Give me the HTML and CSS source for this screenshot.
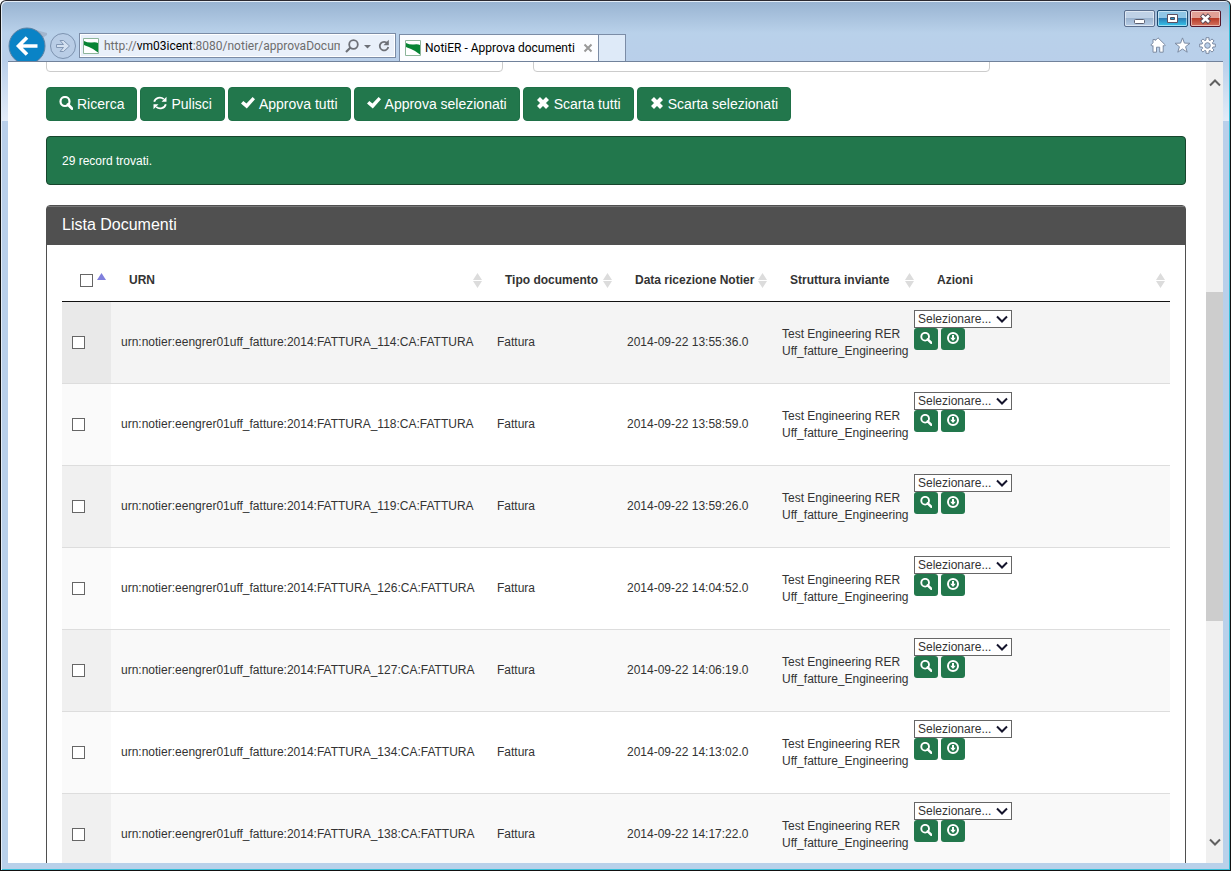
FILE: index.html
```html
<!DOCTYPE html>
<html lang="it">
<head>
<meta charset="utf-8">
<title>NotiER - Approva documenti</title>
<link rel="stylesheet" href="styles.css">
</head>
<body>
<svg class="sprite" aria-hidden="true">
  <symbol id="search" viewBox="0 0 14 14"><circle cx="6" cy="5.500" r="4.500" fill="none" stroke="currentColor" stroke-width="2.200"/><path d="m9 8.500 4 4" stroke="currentColor" stroke-width="3" stroke-linecap="round"/></symbol>
  <symbol id="refresh" viewBox="0 0 14 14"><path d="M1.200 5.800A5.700 5.200 0 0 1 10.800 3.200M12.800 8.200A5.700 5.200 0 0 1 3.200 10.800" fill="none" stroke="currentColor" stroke-width="1.800"/><path d="M13.500.7v5H8.500zM.5 13.300v-5h5z"/></symbol>
  <symbol id="check" viewBox="0 0 14 14"><path d="M0 7.600 2.300 5l3.200 2.600L11.600 1 14 3.200 5.800 12.500z"/></symbol>
  <symbol id="times" viewBox="0 0 14 14"><path d="m2.500 2.500 9 9m0-9-9 9" stroke="currentColor" stroke-width="4.200"/></symbol>
  <symbol id="download" viewBox="0 0 12 12"><circle cx="6" cy="6" r="5" fill="none" stroke="currentColor" stroke-width="2"/><path d="M5 3h2v2.800h1.800L6 9 3.200 5.800H5z"/></symbol>
  <symbol id="chevron" viewBox="0 0 12 8"><path d="M1 1.500 6 6.500 11 1.500" fill="none" stroke="currentColor" stroke-width="2"/></symbol>
  <symbol id="sort" viewBox="0 0 9 15"><path d="M4.500 0 9 7H0zM0 8h9l-4.500 7z"/></symbol>
  <symbol id="flag" viewBox="0 0 16 16"><path d="M.5.500h15v15H.5z" fill="#fff" stroke="#8db59a"/><path d="M1 3q4 2 8 1.500T15 5v9.500Q10 10.500 6 9T1 7z" fill="#078434"/></symbol>
</svg>

<div class="window">
  <header class="chrome">
    <div class="caption">
      <button class="win" type="button" aria-label="Riduci a icona"><svg width="31" height="17"><rect x="10.500" y="9.500" width="10" height="4" rx="1" fill="#fff" stroke="#5b5f70"/></svg></button>
      <button class="win win-max" type="button" aria-label="Ingrandisci"><svg width="31" height="17"><path d="M10.500 4.500h10v8h-10z" fill="#fff" stroke="#5b4f60"/><path d="M13.500 7.500h4v2h-4z" fill="#2b93c8" stroke="#4a4f60"/></svg></button>
      <button class="win win-close" type="button" aria-label="Chiudi"><svg width="31" height="17"><path d="m11.500 5 8 7.500m0-7.500-8 7.500" stroke="#5b4a55" stroke-width="4.500"/><path d="m12 5.500 7 6.500m0-6.500-7 6.500" stroke="#fff" stroke-width="2.500"/></svg></button>
    </div>
    <nav class="nav">
      <button class="plain" type="button" aria-label="Indietro"><svg width="39" height="35"><path d="M22 1q9 3 17 5v2q-6 3-7 11l-6 2z" fill="#a3b6ce"/><circle cx="19" cy="19" r="18" fill="#0a83c6" stroke="#5f83a4"/><path d="M29.500 19H11M19 10.500 10.500 19l8.500 8.500" fill="none" stroke="#fff" stroke-width="3.600"/></svg></button>
      <button class="plain" type="button" aria-label="Avanti"><svg width="32" height="35"><circle cx="16" cy="19" r="12.500" fill="#b9cde6" stroke="#7d93b0"/><path d="M9.500 17.500h7l-3.500-4h3.500l6 5.500-6 5.500H13l3.500-4h-7z" fill="#d4e1f1" stroke="#8297b4"/></svg></button>
      <div class="address">
        <svg class="fav"><use href="#flag"/></svg>
        <div class="url" role="textbox" aria-label="Indirizzo" contenteditable="true" spellcheck="false">http://<span class="host">vm03icent</span>:8080/notier/approvaDocum</div>
        <button class="plain" type="button" aria-label="Cerca"><svg width="14" height="14"><circle cx="8.500" cy="5.500" r="4.300" fill="none" stroke="#6d7077" stroke-width="1.800"/><path d="M5.500 8.500 1 13" stroke="#6d7077" stroke-width="2.200"/></svg></button>
        <button class="plain" type="button" aria-label="Cronologia"><svg width="8" height="14"><path d="M0 6h7L3.500 9.500z" fill="#6d7077"/></svg></button>
        <button class="plain" type="button" aria-label="Aggiorna"><svg width="14" height="14"><path d="M10.500 4.500A4.300 4.300 0 1 0 11.300 8" fill="none" stroke="#6d7077" stroke-width="1.800"/><path d="M11.800.8v5.400H6.500z" fill="#6d7077"/></svg></button>
      </div>
      <div class="tab">
        <svg class="fav"><use href="#flag"/></svg>
        <span class="tab-title">NotiER - Approva documenti</span>
        <button class="plain" type="button" aria-label="Chiudi scheda"><svg width="10" height="10"><path d="m1.500 1.500 7 7m0-7-7 7" stroke="#999" stroke-width="2"/></svg></button>
      </div>
      <button class="new-tab" type="button" aria-label="Nuova scheda"></button>
      <div class="tools">
        <button class="plain" type="button" aria-label="Pagina iniziale"><svg width="16" height="16"><path d="M8 .8 15.300 8l-1.200 1.300-.9-.8v6.700H9.700v-5H6.500v5H3V8.500l-.9.8L.8 8 3 5.800V2.500h2.300v1z" fill="#fff" stroke="#7c8ba3"/></svg></button>
        <button class="plain" type="button" aria-label="Preferiti"><svg width="17" height="16"><path d="m8.500.9 1.900 5.200 5.600.2-4.400 3.400 1.600 5.500-4.700-3.200-4.700 3.200 1.600-5.500L1 6.300l5.600-.2z" fill="#fff" stroke="#7c8ba3"/></svg></button>
        <button class="plain" type="button" aria-label="Strumenti"><svg width="17" height="17" viewBox="-8.500 -8.500 17 17"><path d="M-1.500-7.800h3V-5.400L2.800-4.900 4.500-6.600 6.600-4.500 4.900-2.800 5.400-1.500H7.800v3H5.400L4.900 2.800 6.600 4.500 4.500 6.600 2.800 4.900 1.500 5.400V7.800h-3V5.400L-2.800 4.900-4.500 6.600-6.600 4.500-4.900 2.800-5.400 1.500H-7.800v-3h2.400L-4.900-2.800-6.600-4.500-4.500-6.600-2.800-4.900-1.500-5.400z" fill="#fff" stroke="#7c8ba3"/><circle r="2.800" fill="#b9cfe9" stroke="#7c8ba3"/></svg></button>
      </div>
    </nav>
  </header>

  <div class="viewport">
    <main class="page">
      <div class="filters">
        <input class="field" type="text" aria-label="Filtro 1">
        <input class="field" type="text" aria-label="Filtro 2">
      </div>
      <div class="actions">
        <button class="btn" type="button"><svg class="icon"><use href="#search"/></svg>Ricerca</button>
        <button class="btn" type="button"><svg class="icon"><use href="#refresh"/></svg>Pulisci</button>
        <button class="btn" type="button"><svg class="icon"><use href="#check"/></svg>Approva tutti</button>
        <button class="btn" type="button"><svg class="icon"><use href="#check"/></svg>Approva selezionati</button>
        <button class="btn" type="button"><svg class="icon"><use href="#times"/></svg>Scarta tutti</button>
        <button class="btn" type="button"><svg class="icon"><use href="#times"/></svg>Scarta selezionati</button>
      </div>
      <div class="alert">29 record trovati.</div>
      <section class="panel">
        <h2 class="panel-title">Lista Documenti</h2>
        <div class="panel-body">
          <table class="docs">
            <colgroup><col class="c-check"><col class="c-urn"><col class="c-type"><col class="c-date"><col class="c-org"><col></colgroup>
            <thead>
              <tr>
                <th><div class="head head-check"><input class="box" type="checkbox" aria-label="Seleziona tutti"><svg class="asc" viewBox="0 0 9 7"><path d="M4.500 0 9 7H0z"/></svg></div></th>
                <th><div class="head">URN<svg class="sort"><use href="#sort"/></svg></div></th>
                <th><div class="head">Tipo documento<svg class="sort"><use href="#sort"/></svg></div></th>
                <th><div class="head">Data ricezione Notier<svg class="sort"><use href="#sort"/></svg></div></th>
                <th><div class="head">Struttura inviante<svg class="sort"><use href="#sort"/></svg></div></th>
                <th><div class="head">Azioni<svg class="sort"><use href="#sort"/></svg></div></th>
              </tr>
            </thead>
            <tbody id="rows"></tbody>
          </table>
        </div>
      </section>
    </main>
    <div class="scrollbar" aria-hidden="true">
      <div class="track"><svg class="arrow up"><use href="#chevron"/></svg></div>
      <div class="thumb"></div>
      <div class="track track-end"><svg class="arrow"><use href="#chevron"/></svg></div>
    </div>
  </div>
</div>
<script src="rows.js"></script>
</body>
</html>
```

FILE: styles.css
```css
* { box-sizing: border-box; }
body {
  margin: 0;
  font: 12px/17px "Liberation Sans", Arial, sans-serif;
  color: #333;
}
button, input, select { font: inherit; color: inherit; margin: 0; }
svg { display: block; flex: none; fill: currentColor; }
.sprite { position: absolute; width: 0; height: 0; }

/* Browser window */
.window {
  display: flex;
  flex-direction: column;
  height: 100vh;
  padding: 0 7px 7px;
  border: 1px solid #111;
  border-top-color: #2b2930;
  border-radius: 6px 6px 0 0;
  box-shadow: inset 1px 1px #e4edf7, inset -1px -1px #35bfd9;
  background:
    linear-gradient(#b9d1ea00 60px, #e3ecf8) left top / 7px 120px no-repeat,
    linear-gradient(#b9d1ea00 60px, #e3ecf8) right top / 7px 120px no-repeat,
    linear-gradient(#98b3d1, #b9d1ea 32px, #b9cfea 62px, #b9d1ea);
}
.chrome { flex: none; border-bottom: 1px solid #71829b; }
.caption { display: flex; justify-content: flex-end; gap: 2px; height: 26px; padding: 9px 2px 0 0; }
.win {
  width: 31px;
  height: 17px;
  padding: 0;
  border: 1px solid #5c6f8e;
  border-radius: 2px;
  box-shadow: inset 0 0 0 1px #ffffff80;
  background: linear-gradient(#bfd1e6 50%, #9cb4d0 50%, #b8cee6);
}
.win svg { margin: -1px; }
.win-max { border-color: #1c4a72; background: linear-gradient(#8fc6e6 50%, #2b7db4 50%, #36c6ec); }
.win-close { border-color: #55162a; background: linear-gradient(#e2a196 50%, #b83c28 50%, #d4735f); }
.plain { flex: none; padding: 0; border: 0; background: none; }
.nav { display: flex; align-items: flex-end; height: 34px; font: 12px/16px Roboto, "Open Sans", sans-serif; overflow: hidden; }
.nav > .plain { height: 34px; }
.address {
  display: flex;
  align-items: center;
  gap: 5px;
  flex: 0 1 317px;
  min-width: 0;
  height: 25px;
  margin-bottom: 3px;
  padding: 0 4px 0 2px;
  border: 1px solid #7b8ca6;
  box-shadow: inset 0 0 0 1px #fff;
  background: #e9f0fa;
}
.fav { width: 16px; height: 16px; }
.address .fav { margin-left: 1px; }
.url { flex: 1; min-width: 0; overflow: hidden; white-space: nowrap; color: #6d6d6d; }
.host { color: #000; }
.tab {
  display: flex;
  align-items: center;
  gap: 4px;
  flex: none;
  height: 27px;
  width: 200px;
  margin-left: 3px;
  padding: 0 5px;
  border: 1px solid #7b8ca6;
  border-bottom: 0;
  background: #fcfdff;
  color: #000;
}
.tab-title { flex: 1; min-width: 0; overflow: hidden; white-space: nowrap; }
.new-tab { width: 27px; height: 27px; padding: 0; border: solid #7b8ca6; border-width: 1px 1px 0 0; background: #deeaf8; }
.tools { display: flex; align-items: center; gap: 8px; height: 34px; margin-left: auto; padding: 2px 7px 0 0; }

/* Page area */
.viewport { flex: 1; min-height: 0; display: flex; background: #fff; }
.page { flex: 1; min-width: 0; overflow: hidden; padding: 0 20px 0 38px; }
.filters { display: grid; grid-template-columns: 11fr 11fr 4fr; gap: 30px; margin-top: -24px; }
.field { min-width: 0; height: 34px; border: 1px solid #ccc; border-radius: 4px; background: #fff; }
.actions { display: flex; flex-wrap: wrap; gap: 3px; margin: 15px 0; }
.btn {
  display: flex;
  align-items: center;
  gap: 4px;
  height: 34px;
  padding: 0 12px;
  border: 1px solid #1f7047;
  border-radius: 4px;
  background: #22774c;
  color: #fff;
  font-size: 14px;
}
.icon { width: 14px; height: 14px; margin-bottom: 2px; }
.alert { padding: 16px 15px 14px; margin-bottom: 20px; border: 1px solid #17452d; border-radius: 4px; background: #22774c; color: #fff; }
.panel { border: 1px solid #4f4f4f; border-radius: 4px; }
.panel-title { margin: 0; padding: 8px 15px 11px; border-top: 1px solid #777; background: #505050; color: #fff; font-size: 16px; font-weight: normal; line-height: 19px; }
.panel-body { padding: 15px; }

/* Documents table */
.docs { width: 100%; table-layout: fixed; border-collapse: separate; border-spacing: 0; }
.c-check { width: 49px; }
.c-urn { width: 376px; }
.c-type { width: 130px; }
.c-date { width: 155px; }
.c-org { width: 147px; }
.docs th { height: 42px; padding: 0 5px 0 18px; border-bottom: 1px solid #111; text-align: left; white-space: nowrap; }
.head { display: flex; align-items: center; justify-content: space-between; }
.head-check { justify-content: flex-start; gap: 4px; }
.sort { width: 9px; height: 15px; color: #dcdcdc; }
.asc { width: 9px; height: 7px; margin-bottom: 8px; color: #8080dd; }
.docs td { height: 82px; padding: 0 10px; border-bottom: 1px solid #ddd; }
.docs tbody tr:nth-child(odd) { background: #f9f9f9; }
.docs tbody tr:nth-child(odd) td:first-child { background: #f0f0f0; }
.docs tbody tr:nth-child(even) td:first-child { background: #fafafa; }
.docs tbody tr:first-child { background: #f4f4f4; }
.docs tbody tr:first-child td:first-child { background: #e9e9e9; }
.docs td.ops { padding: 8px 0 0; vertical-align: top; }
.box { appearance: none; display: block; width: 13px; height: 13px; border: 1px solid #666; background: #fff; }
.ops-inner { margin-left: -5px; }
.picker { position: relative; width: 98px; }
.select { appearance: none; display: block; width: 100%; height: 18px; padding: 0 3px; border: 1px solid #666; border-radius: 0; background: #fff; line-height: 16px; }
.picker svg { position: absolute; right: 4px; top: 5px; width: 12px; height: 8px; color: #14142c; pointer-events: none; }
.mini { display: flex; gap: 3px; }
.btn-sm { display: flex; align-items: center; justify-content: center; width: 24px; height: 22px; padding: 0 0 2px; border: 0; border-radius: 3px; background: #22774c; color: #fff; }
.btn-sm svg { width: 12px; height: 12px; }

/* Scrollbar */
.scrollbar { flex: none; width: 17px; display: grid; grid-template-rows: 230fr 329fr 242fr; background: #f0f0f0; }
.thumb { background: #cdcdcd; }
.track { display: flex; flex-direction: column; align-items: center; padding: 17px 0; }
.track-end { justify-content: flex-end; }
.arrow { width: 12px; height: 8px; color: #606060; }
.up { transform: rotate(180deg); }
```

FILE: rows.js
```js
const docs = [
  ["114", "13:55:36.0"],
  ["118", "13:58:59.0"],
  ["119", "13:59:26.0"],
  ["126", "14:04:52.0"],
  ["127", "14:06:19.0"],
  ["134", "14:13:02.0"],
  ["138", "14:17:22.0"]
];
document.getElementById("rows").innerHTML = docs.map(([id, time]) => `
  <tr>
    <td><input class="box" type="checkbox" aria-label="Seleziona FATTURA_${id}"></td>
    <td>urn:notier:eengrer01uff_fatture:2014:FATTURA_${id}:CA:FATTURA</td>
    <td>Fattura</td>
    <td>2014-09-22 ${time}</td>
    <td>Test Engineering RER Uff_fatture_Engineering</td>
    <td class="ops"><div class="ops-inner">
      <div class="picker"><select class="select" aria-label="Azione per FATTURA_${id}"><option>Selezionare...</option></select><svg><use href="#chevron"/></svg></div>
      <div class="mini">
        <button class="btn-sm" type="button" aria-label="Visualizza"><svg><use href="#search"/></svg></button>
        <button class="btn-sm" type="button" aria-label="Scarica"><svg><use href="#download"/></svg></button>
      </div>
    </div></td>
  </tr>`).join("");
```
